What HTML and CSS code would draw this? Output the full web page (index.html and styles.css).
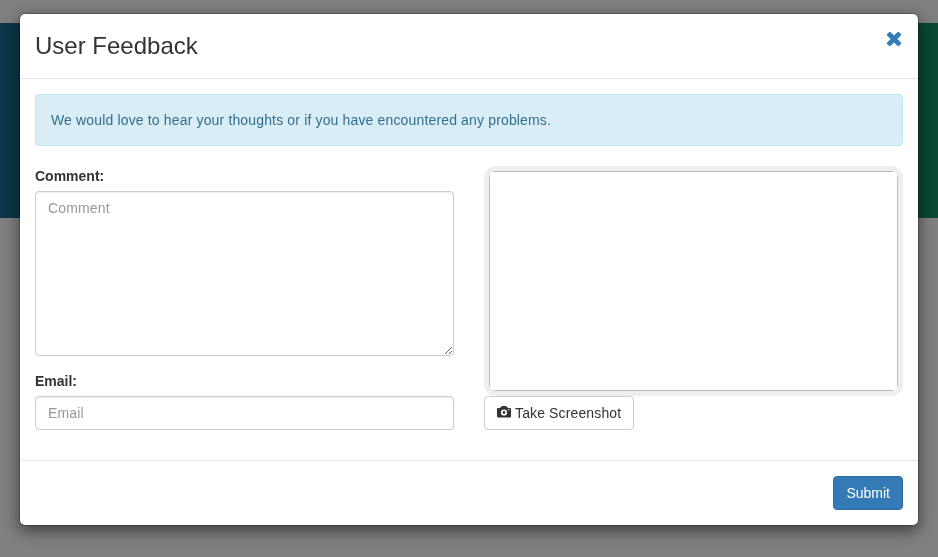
FILE: index.html
```
<!DOCTYPE html>
<html lang="en">
<head>
    <meta charset="UTF-8">
    <meta name="viewport" content="width=device-width, initial-scale=1.0">
    <title>User Feedback</title>
    <link rel="stylesheet" href="styles.css">
</head>
<body>
    <div class="banner"></div>

    <div class="modal-backdrop">
        <form class="modal">
            <div class="modal-header">
                <h3>User Feedback</h3>
                <a class="close" href="#" aria-label="Close">
                    <svg width="16" height="16" viewBox="0 0 16 16">
                        <path d="M4.3.9 8 4.6 11.7.9Q12.2.5 12.7.9L15.1 3.3Q15.5 3.8 15.1 4.3L11.4 8 15.1 11.7Q15.5 12.2 15.1 12.7L12.7 15.1Q12.2 15.5 11.7 15.1L8 11.4 4.3 15.1Q3.8 15.5 3.3 15.1L.9 12.7Q.5 12.2.9 11.7L4.6 8 .9 4.3Q.5 3.8.9 3.3L3.3.9Q3.8.5 4.3.9Z" fill="currentColor"/>
                    </svg>
                </a>
            </div>

            <div class="modal-body">
                <div class="alert">We would love to hear your thoughts or if you have encountered any problems.</div>
                <div class="row">
                    <div class="col">
                        <div class="form-group">
                            <label for="comment">Comment:</label>
                            <textarea class="form-control" id="comment" placeholder="Comment"></textarea>
                        </div>
                        <div class="form-group">
                            <label for="email">Email:</label>
                            <input class="form-control" id="email" type="text" placeholder="Email">
                        </div>
                    </div>
                    <div class="col">
                        <div class="screenshot"><div class="preview"></div></div>
                        <button class="btn btn-default" type="button">
                            <svg class="icon" width="14" height="14" viewBox="0 0 14 14">
                                <path fill-rule="evenodd" d="M1 3h2l1.4-1.6Q4.8 1 5.3 1h3.4q.5 0 .9.4L11 3h2q1 0 1 1v7.5q0 1-1 1H1q-1 0-1-1V4q0-1 1-1ZM7 4.4a3.1 3.1 0 1 0 0 6.2 3.1 3.1 0 0 0 0-6.2ZM7 6.1a1.4 1.4 0 1 1 0 2.8A1.4 1.4 0 0 1 7 6.1ZM11.2 4.1v1.1h1.1V4.1Z" fill="currentColor"/>
                            </svg>
                            Take Screenshot
                        </button>
                    </div>
                </div>
            </div>

            <div class="modal-footer">
                <button class="btn btn-primary" type="button">Submit</button>
            </div>
        </form>
    </div>
</body>
</html>
```
FILE: styles.css
```
* {
    box-sizing: border-box;
}

body {
    margin: 0;
    padding-top: 23px;
    background-color: #fff;
    color: #333;
    font-family: Arial, "Liberation Sans", sans-serif;
    font-size: 14px;
    line-height: 20px;
    overflow: hidden;
}

.banner {
    height: 195px;
    background: linear-gradient(to right, #166c90, #16906a);
}

.modal-backdrop {
    position: fixed;
    inset: 0;
    padding-top: 13px;
    background-color: rgba(0, 0, 0, 0.5);
}

.modal {
    width: 900px;
    margin: 0 auto;
    background-color: #fff;
    background-clip: padding-box;
    border: 1px solid rgba(0, 0, 0, 0.2);
    border-radius: 6px;
    box-shadow: 0 5px 15px rgba(0, 0, 0, 0.5);
}

.modal-header {
    display: flex;
    justify-content: space-between;
    height: 65px;
    padding: 15px;
    border-bottom: 1px solid #e5e5e5;
}

.modal-header h3 {
    margin: 0;
    font-size: 24px;
    font-weight: 500;
    line-height: 34px;
}

.close {
    height: 16px;
    margin: 2px 1px 0 0;
    color: #337ab7;
}

.close svg {
    display: block;
}

.modal-body {
    padding: 15px;
}

.alert {
    padding: 15px;
    margin-bottom: 20px;
    background-color: #d9edf7;
    border: 1px solid #bce8f1;
    border-radius: 4px;
    color: #31708f;
    letter-spacing: 0.152px;
}

.row {
    display: grid;
    grid-template-columns: 1fr 1fr;
    gap: 30px;
}

.form-group {
    margin-bottom: 15px;
}

label {
    display: block;
    margin-bottom: 5px;
    font-weight: bold;
}

.form-control {
    display: block;
    width: 100%;
    height: 34px;
    padding: 6px 12px;
    background-color: #fff;
    border: 1px solid #ccc;
    border-radius: 4px;
    box-shadow: inset 0 1px 1px rgba(0, 0, 0, 0.075);
    color: #555;
    font: inherit;
    letter-spacing: 0.15px;
}

.form-control::placeholder {
    color: #999;
}

textarea.form-control {
    height: 165px;
}

.screenshot {
    height: 230px;
    border: 5px solid #eee;
    border-radius: 12px;
    overflow: hidden;
}

.preview {
    height: 100%;
    border: 1px solid #bbb;
}

.btn {
    display: flex;
    align-items: center;
    gap: 4px;
    height: 34px;
    padding: 6px 12px;
    border: 1px solid #ccc;
    border-radius: 4px;
    font: inherit;
}

.btn-default {
    background-color: #fff;
    color: #333;
    letter-spacing: 0.13px;
}

.icon {
    margin-top: -3px;
}

.btn-primary {
    background-color: #337ab7;
    border-color: #2e6da4;
    color: #fff;
}

.modal-footer {
    display: flex;
    justify-content: flex-end;
    padding: 15px;
    border-top: 1px solid #e5e5e5;
}
```
